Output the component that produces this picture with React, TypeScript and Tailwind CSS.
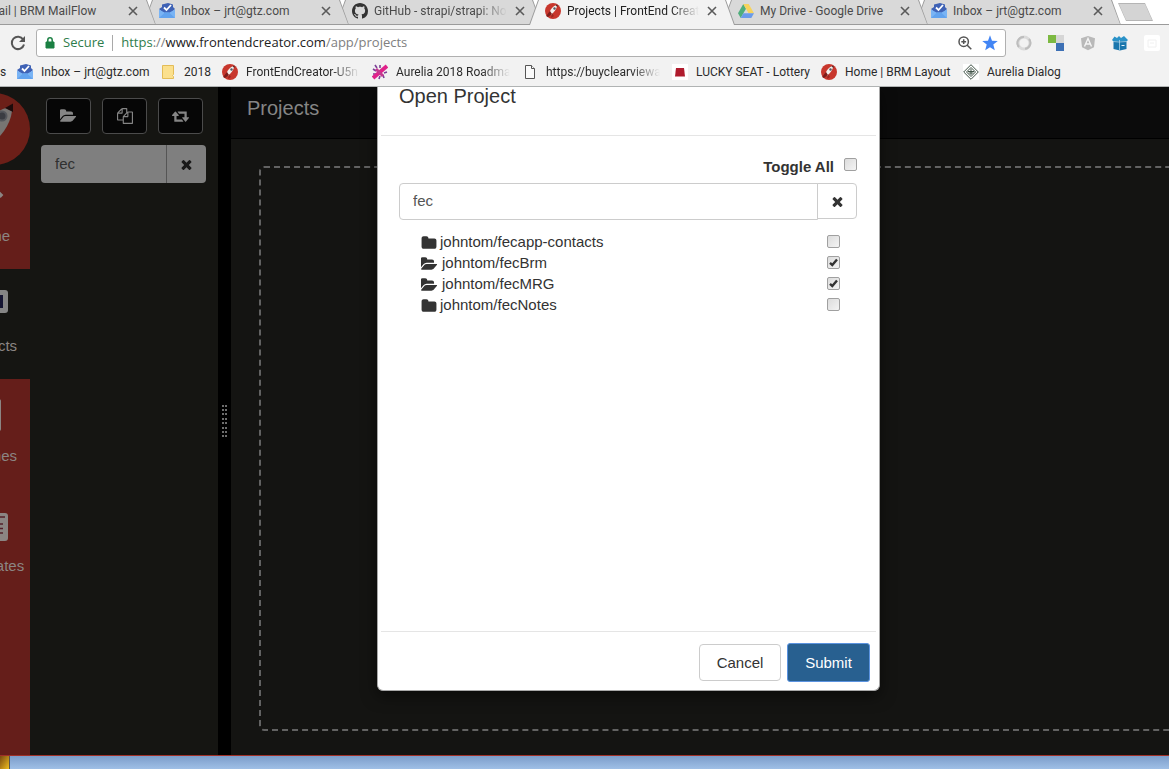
import React from "react";

const PATHS = {
  folder:
    "M1728 608v704q0 92-66 158t-158 66h-1216q-92 0-158-66t-66-158v-960q0-92 66-158t158-66h320q92 0 158 66t66 158v32h672q92 0 158 66t66 158z",
  folderOpen:
    "M1815 952q0 31-31 66l-336 396q-43 51-120.5 86.5t-143.5 35.5h-1088q-34 0-60.5-13t-26.5-43q0-31 31-66l336-396q43-51 120.5-86.5t143.5-35.5h1088q34 0 60.5 13t26.5 43zm-343-344v160h-832q-94 0-197 47.5t-164 119.5l-337 396-5 6q0-4-.5-12.5t-.5-12.5v-960q0-92 66-158t158-66h320q92 0 158 66t66 158v32h544q92 0 158 66t66 158z",
  files:
    "M1696 384q40 0 68 28t28 68v1216q0 40-28 68t-68 28h-960q-40 0-68-28t-28-68v-288h-544q-40 0-68-28t-28-68v-672q0-40 20-88t48-76l408-408q28-28 76-48t88-20h416q40 0 68 28t28 68v328q68-40 128-40h416zm-544 213l-299 299h299v-299zm-640-384l-299 299h299v-299zm196 647l316-316v-416h-384v416q0 40-28 68t-68 28h-416v640h512v-256q0-40 20-88t48-76zm956 804v-1152h-384v416q0 40-28 68t-68 28h-416v640h896z",
  retweet:
    "M1280 1504q0 13-9.5 22.5t-22.5 9.5h-960q-8 0-13.5-2t-9-7-5.5-8-3-11.5-1-11.5v-600h-192q-26 0-45-19t-19-45q0-24 15-41l320-384q19-22 49-22t49 22l320 384q15 17 15 41 0 26-19 45t-45 19h-192v384h576q16 0 25 11l160 192q7 10 7 21zm640-416q0 24-15 41l-320 384q-20 23-49 23t-49-23l-320-384q-15-17-15-41 0-26 19-45t45-19h192v-384h-576q-16 0-25-12l-160-192q-7-9-7-20 0-13 9.5-22.5t22.5-9.5h960q8 0 13.5 2t9 7 5.5 8 3 11.5 1 11.5v600h192q26 0 45 19t19 45z",
  times:
    "M1490 1322q0 40-28 68l-136 136q-28 28-68 28t-68-28l-294-294-294 294q-28 28-68 28t-68-28l-136-136q-28-28-28-68t28-68l294-294-294-294q-28-28-28-68t28-68l136-136q28-28 68-28t68 28l294 294 294-294q28-28 68-28t68 28l136 136q28 28 28 68t-28 68l-294 294 294 294q28 28 28 68z",
};

function Glyph({ name, wide = false, className }: { name: keyof typeof PATHS; wide?: boolean; className: string }) {
  return (
    <svg viewBox={wide ? "0 0 1920 1792" : "0 0 1792 1792"} className={`fill-current ${className}`} aria-hidden="true">
      <path d={PATHS[name]} />
    </svg>
  );
}

function InboxIcon() {
  return (
    <svg viewBox="0 0 16 16" className="size-4 shrink-0" aria-hidden="true">
      <path d="M0 6 3 4V1.500L9 0l5 1.500V4l2 2-5 5H5z" fill="#3f62b5" />
      <path d="M5 4.500 7.500 7 12 2" stroke="#fff" strokeWidth="1.800" fill="none" />
      <path d="M0 6.500 5.500 9.500h5L16 6.500V15H0z" fill="#79b4f5" />
      <path d="M0 15 6 9.500h4l6 5.500z" fill="#62a3ee" />
    </svg>
  );
}

function RocketIcon() {
  return (
    <svg viewBox="0 0 16 16" className="size-4 shrink-0" aria-hidden="true">
      <circle cx="8" cy="8" r="8" fill="#c8372d" />
      <path d="M4 11.500 5.500 7C7.500 4 9.500 2.500 12 2c0 2.500-1 5-4 8l-2 2z" fill="#f4f1ee" />
      <path d="M10.500 2.500 12.500 1.500 12.500 4z" fill="#43282a" />
      <circle cx="9.500" cy="5.500" r="1.200" fill="#555b66" />
      <path d="M1 13l4-5 2 3-4 3z" fill="#7e1d1a" />
      <path d="M7 10l2 3-3 2z" fill="#9a2822" />
    </svg>
  );
}

function GithubIcon() {
  return (
    <svg viewBox="0 0 16 16" className="size-4 shrink-0 fill-[#333]" aria-hidden="true">
      <path d="M8 0C3.580 0 0 3.580 0 8c0 3.540 2.290 6.530 5.470 7.590.4.070.55-.17.55-.38 0-.19-.01-.82-.01-1.490-2.010.37-2.530-.49-2.690-.94-.09-.23-.48-.94-.82-1.130-.28-.15-.68-.52-.01-.53.63-.01 1.080.58 1.230.82.72 1.210 1.870.87 2.330.66.07-.52.28-.87.51-1.070-1.780-.2-3.640-.89-3.640-3.950 0-.87.31-1.590.82-2.150-.08-.2-.36-1.020.08-2.120 0 0 .67-.21 2.200.82.64-.18 1.320-.27 2-.27s1.360.09 2 .27c1.530-1.040 2.200-.82 2.200-.82.44 1.100.16 1.920.08 2.120.51.56.82 1.270.82 2.150 0 3.070-1.870 3.750-3.650 3.950.29.25.54.73.54 1.480 0 1.070-.01 1.930-.01 2.200 0 .21.15.46.55.38A8 8 0 0 0 16 8c0-4.420-3.580-8-8-8z" />
    </svg>
  );
}

function DriveIcon() {
  return (
    <svg viewBox="0 0 16 16" className="size-4 shrink-0" aria-hidden="true">
      <path d="M5.300 1 0 10.300 2.700 15 8 5.700z" fill="#4fae7c" />
      <path d="M5.300 1h5.400L16 10.300h-5.400z" fill="#f7d35c" />
      <path d="M5.400 10.300H16L13.300 15H2.700z" fill="#6a9bea" />
    </svg>
  );
}

function AureliaIcon() {
  return (
    <svg viewBox="0 0 16 16" className="size-4 shrink-0" aria-hidden="true">
      <path d="M3 1l2 3M8 1v3M1 5l3 2M12 14l-1-3M7 15l1-3M1 10l3 0M15 8l-3 1" stroke="#7c3f97" strokeWidth="1.600" />
      <path d="M1 14 15 2" stroke="#e0218a" strokeWidth="4" />
      <path d="M4 5l7 7" stroke="#c4398f" strokeWidth="3" />
    </svg>
  );
}

type TabInfo = { title: string; icon?: React.ReactNode; active?: boolean; faded?: boolean; z: string };

const tabs: TabInfo[] = [
  { title: "Mail | BRM MailFlow", z: "z-[5]" },
  { title: "Inbox – jrt@gtz.com", icon: <InboxIcon />, z: "z-[4]" },
  { title: "GitHub - strapi/strapi: No", icon: <GithubIcon />, faded: true, z: "z-[3]" },
  { title: "Projects | FrontEnd Creat", icon: <RocketIcon />, active: true, faded: true, z: "z-10" },
  { title: "My Drive - Google Drive", icon: <DriveIcon />, z: "z-[2]" },
  { title: "Inbox – jrt@gtz.com", icon: <InboxIcon />, z: "z-[1]" },
];

const slant = "[clip-path:polygon(9px_0,calc(100%-9px)_0,100%_100%,0_100%)]";
const fade = "[mask-image:linear-gradient(to_right,black_calc(100%-28px),transparent)]";

function Tab({ tab }: { tab: TabInfo }) {
  return (
    <div className={`relative -mr-[13px] h-[25px] w-[206px] shrink-0 ${tab.z}`}>
      <div className={`absolute inset-0 bg-[#9b9b9b] ${slant}`} />
      <div className={`absolute inset-x-px top-0 ${slant} ${tab.active ? "bottom-0 bg-[#f2f2f2]" : "bottom-px bg-[#d9d9d9]"}`} />
      <div className="relative flex h-[22px] items-center pr-[18px] pl-4">
        {tab.icon ?? <span className="size-4 shrink-0" />}
        <a
          href="#tab"
          className={`ml-1.5 flex-1 text-[12px] whitespace-nowrap ${tab.faded ? fade : ""} ${tab.active ? "text-[#222]" : "text-[#4a4a4a]"}`}
        >
          {tab.title}
        </a>
        <button aria-label={`Close ${tab.title}`} className="ml-2 flex size-[10px] items-center">
          <svg viewBox="0 0 10 10" className="size-[10px] stroke-[#5a5a5a]" strokeWidth="1.600" aria-hidden="true">
            <path d="M1 1l8 8M9 1 1 9" />
          </svg>
        </button>
      </div>
    </div>
  );
}

function TabStrip() {
  return (
    <div className="relative h-[25px] overflow-hidden bg-white">
      <div className="absolute inset-x-0 bottom-0 h-px bg-[#9b9b9b]" />
      <div className="-ml-[50px] flex">
        {tabs.map((t, i) => (
          <Tab key={i} tab={t} />
        ))}
        <button aria-label="New tab" className="mt-[3px] ml-[10px] h-[18px] w-[35px] shrink-0 bg-[#b5b5b5] [clip-path:polygon(0_0,27px_0,100%_100%,8px_100%)]">
          <span className="mx-px my-px block h-4 bg-[#d4d4d4] [clip-path:polygon(0_0,26px_0,100%_100%,7px_100%)]" />
        </button>
      </div>
    </div>
  );
}

function AddressBar() {
  return (
    <div className="flex items-center bg-[#f2f2f2] pt-1 pl-2.5">
      <button aria-label="Reload">
        <svg viewBox="0 0 16 16" className="size-4" fill="none" stroke="#555" strokeWidth="2" aria-hidden="true">
          <path d="M13.200 4.500A6.200 6.200 0 1 0 14 9.500" />
          <path d="M15 1v6H9z" fill="#555" stroke="none" />
        </svg>
      </button>
      <div className="ml-2.5 flex h-7 flex-1 items-center rounded-[3px] border border-[#b0b0b0] bg-white px-[7px] pl-2 font-['Open_Sans',sans-serif] text-[13px]">
        <svg viewBox="0 0 10 12" className="h-3 w-2.5" aria-hidden="true">
          <path d="M1 5h8v6H1z" fill="#1b8043" stroke="#1b8043" />
          <path d="M2.800 5V3a2.200 2.200 0 0 1 4.400 0v2" fill="none" stroke="#1b8043" strokeWidth="1.500" />
        </svg>
        <span className="ml-2 text-[#2f7d4c]">Secure</span>
        <span className="mx-2 h-4 w-px bg-[#a9a9a9]" />
        <span className="flex-1 whitespace-nowrap text-[#808080]">
          <span className="text-[#2f7d4c]">https</span>://<span className="text-[#222]">www.frontendcreator.com</span>/app/projects
        </span>
        <svg viewBox="0 0 14 14" className="size-3.5" fill="none" stroke="#555" strokeWidth="1.500" aria-hidden="true">
          <circle cx="5.700" cy="5.700" r="4.700" />
          <path d="M9 9l4.300 4.300M3.300 5.700h4.800M5.700 3.300v4.800" />
        </svg>
        <svg viewBox="0 0 16 16" className="ml-2.5 size-4 fill-[#4285f4]" aria-hidden="true">
          <path d="M8 .3l2 5.400 5.800.3-4.500 3.600 1.500 5.700L8 12.200l-4.800 3.100 1.500-5.700L.2 6 6 5.700z" />
        </svg>
      </div>
      <div className="flex items-center gap-4 pr-[9px] pl-[10px]">
        <svg viewBox="0 0 16 16" className="size-4" fill="none" aria-hidden="true">
          <circle cx="8" cy="8" r="6" stroke="#dadada" strokeWidth="3" />
          <path d="M3 12A6 6 0 0 1 8 2M13 4a6 6 0 0 1-4 9.800" stroke="#bdbdbd" strokeWidth="2" />
        </svg>
        <svg viewBox="0 0 16 16" className="size-4" aria-hidden="true">
          <path d="M0 0h8v8H0z" fill="#7db942" />
          <path d="M8 0h8v8H8z" fill="#d6d6d6" />
          <path d="M8 8h8v8H8z" fill="#3d70b5" />
        </svg>
        <svg viewBox="0 0 16 16" className="size-4" aria-hidden="true">
          <path d="M8 1 15 3.200l-1 9-6 3-6-3-1-9z" fill="#b9b9b9" />
          <path d="M4.500 11.500 8 3.500l3.500 8M6 9h4" stroke="#f5f5f5" strokeWidth="1.400" fill="none" />
        </svg>
        <svg viewBox="0 0 16 16" className="size-4" aria-hidden="true">
          <path d="M0 5l2.500-3.500L5 3l2-2 2 2 3-2 1.500 1.500L16 5l-2 2H2z" fill="#2a92c8" />
          <path d="M1.500 6h13v8L8 15.500l-6.500-1.500z" fill="#1a76ad" />
          <path d="M7.500 5v10M1 6.500l6 .5 8-.5" stroke="#bfe0f1" strokeWidth=".7" fill="none" />
          <path d="M9.500 10.500h3" stroke="#e8f4fa" />
        </svg>
        <svg viewBox="0 0 16 16" className="size-4" aria-hidden="true">
          <rect width="16" height="16" rx="2" fill="#fff" />
          <path d="M4 5h8v7H4zM6 8h4" fill="none" stroke="#f0f0f0" />
        </svg>
      </div>
    </div>
  );
}

function Bookmark({ icon, label, width }: { icon: React.ReactNode; label: string; width: string }) {
  return (
    <a href="#bookmark" className={`flex shrink-0 items-center gap-2 whitespace-nowrap ${width}`}>
      {icon}
      <span>{label}</span>
    </a>
  );
}

function Bookmarks() {
  return (
    <nav className="flex h-[30px] items-center overflow-hidden border-b border-[#b0b3b3] bg-[#f2f2f2] text-[12px] text-[#2b2b2b]">
      <span className="w-[17px] shrink-0">s</span>
      <Bookmark icon={<InboxIcon />} label="Inbox – jrt@gtz.com" width="w-[143px]" />
      <Bookmark
        icon={
          <svg viewBox="0 0 16 16" className="size-4 shrink-0" aria-hidden="true">
            <path d="M2.500 1.500h11v9l-1 1 1 1v2h-11z" fill="#fbe08d" stroke="#e3bc57" />
          </svg>
        }
        label="2018"
        width="w-[62px]"
      />
      <Bookmark icon={<RocketIcon />} label="FrontEndCreator-U5n" width={`w-[138px] mr-3 ${fade}`} />
      <Bookmark icon={<AureliaIcon />} label="Aurelia 2018 Roadma" width={`w-[138px] mr-3 ${fade}`} />
      <Bookmark
        icon={
          <svg viewBox="0 0 16 16" className="size-4 shrink-0" fill="#fafafa" stroke="#555" aria-hidden="true">
            <path d="M3.500 1.500h6l3 3v10h-9z" />
            <path d="M9.500 1.500v3h3" />
          </svg>
        }
        label="https://buyclearviewa"
        width={`w-[138px] mr-3 ${fade}`}
      />
      <Bookmark
        icon={
          <svg viewBox="0 0 16 16" className="size-4 shrink-0" aria-hidden="true">
            <path d="M0 0h16v16H0z" fill="#fff" />
            <path d="M4 4h8l1 8.500H3z" fill="#b01c2e" />
          </svg>
        }
        label="LUCKY SEAT - Lottery"
        width="w-[149px]"
      />
      <Bookmark icon={<RocketIcon />} label="Home | BRM Layout" width="w-[142px]" />
      <Bookmark
        icon={
          <svg viewBox="0 0 16 16" className="size-4 shrink-0" fill="none" stroke="#3f5246" aria-hidden="true">
            <path d="M0 0h16v16H0z" fill="#fff" stroke="none" />
            <path d="M8 .7 15.300 8 8 15.300.7 8z" />
            <path d="M8 3.500 12.500 8 8 12.500 3.500 8zM5 7.500h6M5.500 9h5M8 5v6" />
          </svg>
        }
        label="Aurelia Dialog"
        width="w-[110px]"
      />
    </nav>
  );
}

function NavItem({ label, active = false, children }: { label: string; active?: boolean; children: React.ReactNode }) {
  return (
    <a href="#nav" className={`-ml-[50px] flex h-[110px] w-20 flex-col items-center pt-4 ${active ? "bg-[#151512]" : "bg-[#651e1a]"}`}>
      <span className="flex h-9 items-end">{children}</span>
      <span className="mt-[15px] text-[15px] leading-5 text-[#8b8583]">{label}</span>
    </a>
  );
}

function NavRail() {
  return (
    <nav className="flex w-[30px] shrink-0 flex-col overflow-hidden bg-[#651e1a]">
      <div className="h-[83px] bg-[#151512] pt-1.5">
        <svg viewBox="0 0 72 72" className="-ml-[42px] size-[72px] max-w-none" aria-hidden="true">
          <circle cx="36" cy="36" r="36" fill="#6c1f18" />
          <path d="M20 50C24 34 32 20 48 15l6 3c-1 8-4 14-8 20-5 7-12 13-20 18z" fill="#777573" />
          <path d="M47 15 55 10.500 55 19z" fill="#1c0b0b" />
          <circle cx="44" cy="23" r="4.500" fill="#3a3c42" stroke="#55575c" strokeWidth="2" />
        </svg>
      </div>
      <div className="h-[99px] overflow-hidden">
        <div className="-mt-[11px]">
          <NavItem label="Home">
            <svg viewBox="0 0 32 32" className="size-8" fill="none" stroke="#8b8583" strokeWidth="4" aria-hidden="true">
              <path d="M2 16 14 4l14 13.500M8 17v11h13V17" />
            </svg>
          </NavItem>
        </div>
      </div>
      <NavItem label="Projects" active>
        <svg viewBox="0 0 36 32" className="h-8 w-9" aria-hidden="true">
          <rect y="1" width="36" height="23" rx="3" fill="#858585" />
          <path d="M4 6h27v13H4z" fill="#151532" />
        </svg>
      </NavItem>
      <NavItem label="Themes">
        <svg viewBox="0 0 22 32" className="h-8 w-[22px]" aria-hidden="true">
          <rect width="22" height="32" rx="2" fill="#8b8583" />
          <path d="M4 5h14v22H4z" fill="#651e1a" />
        </svg>
      </NavItem>
      <NavItem label="Templates">
        <svg viewBox="0 0 36 28" className="h-7 w-9" aria-hidden="true">
          <rect width="36" height="28" rx="3" fill="#8b8583" />
          <path d="M4 4h29M4 11h27M4 15.500h27M4 20h27" stroke="#54202a" strokeWidth="1.500" />
        </svg>
      </NavItem>
    </nav>
  );
}

const toolButton = "flex h-9 w-[45px] items-center justify-center rounded-[4px] border border-[#4b4b4b] bg-[#060606] text-[#858585]";

function SidePanel() {
  return (
    <aside className="w-[188px] shrink-0 bg-[#151512] pt-[11px]">
      <div className="flex gap-[11px] pl-4">
        <button aria-label="Open project" className={toolButton}>
          <Glyph name="folderOpen" wide className="h-4 w-[17px]" />
        </button>
        <button aria-label="Copy project" className={toolButton}>
          <Glyph name="files" className="size-4" />
        </button>
        <button aria-label="Refresh projects" className={toolButton}>
          <Glyph name="retweet" wide className="h-4 w-[17px]" />
        </button>
      </div>
      <div className="mt-[11px] mr-3 ml-[11px] flex h-[38px] overflow-hidden rounded-[4px] bg-[#7f7f7f]">
        <input aria-label="Filter projects" defaultValue="fec" className="min-w-0 flex-1 border-r border-[#555] pl-3.5 text-[15px] text-[#303030] outline-none" />
        <button aria-label="Clear filter" className="flex w-[39px] items-center justify-center text-[#1a1a1a]">
          <Glyph name="times" className="size-[15px]" />
        </button>
      </div>
    </aside>
  );
}

function Splitter() {
  return (
    <div className="flex w-[13px] shrink-0 items-center justify-center bg-black">
      <div className="grid h-[33px] grid-cols-2 content-between gap-x-px">
        {Array.from({ length: 16 }, (_, i) => (
          <span key={i} className="size-[2px] bg-[#6d6d6d]" />
        ))}
      </div>
    </div>
  );
}

const projects = [
  { name: "johntom/fecapp-contacts", open: false },
  { name: "johntom/fecBrm", open: true },
  { name: "johntom/fecMRG", open: true },
  { name: "johntom/fecNotes", open: false },
];

const tick =
  "size-[13px] appearance-none rounded-[2px] border border-[#a0a0a0] bg-linear-to-br from-[#dcdcdc] to-[#f4f4f4]";

function CheckBox({ id, checked = false }: { id: string; checked?: boolean }) {
  return (
    <span className="relative block size-[13px]">
      <input id={id} type="checkbox" defaultChecked={checked} className={`peer block ${tick}`} />
      <svg
        viewBox="0 0 13 13"
        className="pointer-events-none absolute inset-0 hidden size-[13px] peer-checked:block"
        fill="none"
        stroke="#333"
        strokeWidth="2.400"
        aria-hidden="true"
      >
        <path d="M3 6.800 5.300 9 10 3.500" />
      </svg>
    </span>
  );
}

function OpenProjectDialog() {
  return (
    <div className="absolute inset-0 flex items-start justify-center overflow-hidden pl-[88px]">
      <div
        role="dialog"
        aria-label="Open Project"
        className="w-[503px] rounded-b-[6px] border-x border-b border-[#a8a8a8] bg-white px-[3px] text-[15px] text-[#333] shadow-[0_5px_15px_rgba(0,0,0,0.5)]"
      >
        <h2 className="border-b border-[#e5e5e5] pb-[30px] pl-[18px] text-[20px] leading-[18px]">Open Project</h2>
        <div className="h-[495px] pt-5 pr-[19px] pl-[18px]">
          <div className="flex items-center justify-end">
            <label htmlFor="toggle-all" className="mr-2.5 leading-[22px] font-bold">
              Toggle All
            </label>
            <span className="-mt-1.5">
              <CheckBox id="toggle-all" />
            </span>
          </div>
          <div className="mt-[5px] flex">
            <input
              aria-label="Search projects"
              defaultValue="fec"
              className="h-[37px] min-w-0 flex-1 rounded-l-[4px] border border-[#ccc] pb-0.5 pl-[13px] text-[#555] outline-none"
            />
            <button aria-label="Clear search" className="-ml-px flex h-9 w-10 items-center justify-center rounded-r-[4px] border border-[#ccc]">
              <Glyph name="times" className="size-[15px]" />
            </button>
          </div>
          <ul className="mt-[11px] pr-[17px] pl-[22px]">
            {projects.map((p) => (
              <li key={p.name} className="flex h-[21px] items-center justify-between">
                <label htmlFor={p.name} className="flex items-center pt-0.5">
                  {p.open ? (
                    <Glyph name="folderOpen" wide className="mr-1 h-4 w-[17px]" />
                  ) : (
                    <Glyph name="folder" className="mr-[3px] size-4" />
                  )}
                  {p.name}
                </label>
                <CheckBox id={p.name} checked={p.open} />
              </li>
            ))}
          </ul>
        </div>
        <div className="flex items-center justify-end gap-1.5 border-t border-[#e5e5e5] pt-[11px] pr-1.5 pb-2">
          <button className="h-[37px] w-[82px] rounded-[4px] border border-[#ccc] pt-0.5">Cancel</button>
          <button className="h-[39px] w-[83px] rounded-[3px] border border-[#5b93e0] bg-[#286090] pt-0.5 text-white">Submit</button>
        </div>
      </div>
    </div>
  );
}

export default function App() {
  return (
    <div className="flex h-screen flex-col overflow-hidden font-['Liberation_Sans',sans-serif]">
      <header className="font-['Roboto',sans-serif]">
        <TabStrip />
        <AddressBar />
        <Bookmarks />
      </header>
      <div className="relative flex min-h-0 flex-1 border-b border-[#a03028] bg-[#151512]">
        <NavRail />
        <SidePanel />
        <Splitter />
        <main className="flex min-w-0 flex-1 flex-col overflow-hidden bg-[#141412]">
          <h1 className="h-[52px] border-b border-black bg-[#0b0b0b] pt-2 pl-4 text-[20px] leading-[26px] text-[#858585]">Projects</h1>
          <div className="mt-[27px] -mr-5 mb-6 ml-7 flex-1 rounded-[5px] border-2 border-dashed border-[#626262]" />
        </main>
        <OpenProjectDialog />
      </div>
      <footer className="flex h-[13px] bg-linear-to-b from-[#7c9dca] to-[#9fbfe6]">
        <span className="w-[10px] border-r border-[#555] bg-linear-to-br from-[#7a4a10] to-[#f0c020]" />
      </footer>
    </div>
  );
}
